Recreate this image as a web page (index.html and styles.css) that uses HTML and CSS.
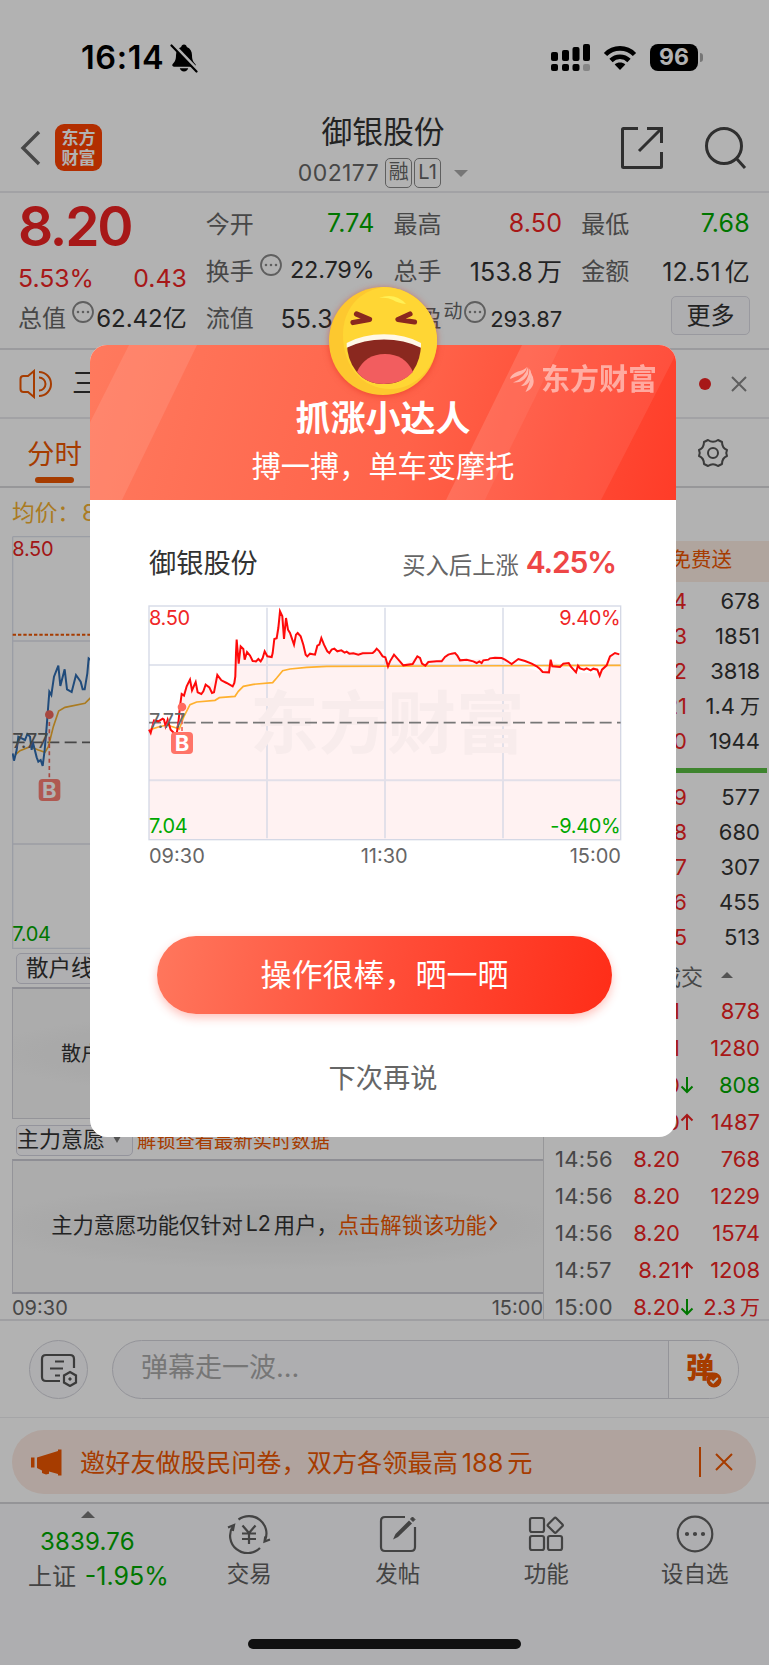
FILE: index.html
```html
<!DOCTYPE html>
<html lang="zh-CN">
<head>
  <meta charset="UTF-8">
  <title>御银股份</title>
  <link rel="stylesheet" href="styles.css">
</head>
<body>
<div class="phone">
  <div class="status">
    <span class="clock">16:14</span>
    <svg class="bell" width="30" height="30" viewBox="0 0 30 30">
      <path d="M15 1.500c1.600 0 2.600 1 2.800 2.500 3.500 1.400 5.200 4.200 5.200 8.300 0 5 1.500 6.800 3.300 8.800.9 1.100.4 2.600-1.200 2.600H4.900c-1.600 0-2.100-1.500-1.200-2.600C5.500 19.100 7 17.300 7 12.300 7 8.200 8.700 5.400 12.200 4c.2-1.500 1.200-2.500 2.800-2.500z"/>
      <path d="M10.800 25.300h8.400c-.5 2-2 3.200-4.200 3.200s-3.700-1.200-4.200-3.200z"/>
      <path d="M4 1.500L28.500 27" stroke="#fff" stroke-width="3.500"/>
      <path d="M2.500 2.500L27.500 28.500" stroke="#000" stroke-width="2.200" stroke-linecap="round"/>
    </svg>
    <svg class="signal" width="40" height="28" viewBox="0 0 40 28">
      <rect x="0" y="8" width="7" height="9" rx="2"/>
      <rect x="11" y="6" width="7" height="11" rx="2"/>
      <rect x="21.500" y="3" width="7" height="14" rx="2"/>
      <rect x="32" y="0" width="7" height="17" rx="2"/>
      <rect x="0" y="20" width="7" height="7" rx="2"/>
      <rect x="11" y="20" width="7" height="7" rx="2"/>
      <rect x="21.500" y="20" width="7" height="7" rx="2"/>
      <rect x="32" y="20" width="7" height="7" rx="2" opacity=".25"/>
    </svg>
    <svg class="wifi" width="34" height="26" viewBox="0 0 34 26">
      <path d="M2.500 9.500C10.500 1.300 23.500 1.300 31.500 9.500" fill="none" stroke="#000" stroke-width="4.600"/>
      <path d="M8 15.500c5-5 13-5 18 0" fill="none" stroke="#000" stroke-width="4.600"/>
      <path d="M17 25l-5.300-5.500c3-2.600 7.600-2.600 10.600 0z"/>
    </svg>
    <span class="battery">96</span><i class="battery-cap"></i>
  </div>

  <div class="header">
    <svg class="back" width="22" height="36" viewBox="0 0 22 36"><path d="M19 2L3 18l16 16" fill="none" stroke="#666" stroke-width="3.400"/></svg>
    <div class="logo"><span>东方</span><span>财富</span></div>
    <div class="stock">
      <h1>御银股份</h1>
      <p><span>002177</span><b class="rong">融</b><b>L1</b><i class="down"></i></p>
    </div>
    <svg class="share" width="44" height="44" viewBox="0 0 44 44" fill="none" stroke="#444" stroke-width="3">
      <path d="M18 2.500H3.500a1 1 0 0 0-1 1v37a1 1 0 0 0 1 1h37a1 1 0 0 0 1-1V26"/>
      <path d="M19 25L41 3M27 2.500h14.500V17"/>
    </svg>
    <svg class="search" width="44" height="44" viewBox="0 0 44 44" fill="none" stroke="#444" stroke-width="3">
      <circle cx="20" cy="20" r="17.500"/><path d="M32 32l9 10"/>
    </svg>
  </div>

  <div class="quote">
    <div class="price-col">
      <div class="price red">8.20</div>
      <div class="change red"><span>5.53%</span><span>0.43</span></div>
      <div class="item"><span class="label">总值</span><svg class="dots" viewBox="0 0 22 22"><circle cx="11" cy="11" r="10"/><path d="M6 11h.01M11 11h.01M16 11h.01"/></svg><span>62.42亿</span></div>
    </div>
    <div class="col">
      <div class="item"><span class="label">今开</span><span class="green">7.74</span></div>
      <div class="item"><span class="label">换手</span><svg class="dots" viewBox="0 0 22 22"><circle cx="11" cy="11" r="10"/><path d="M6 11h.01M11 11h.01M16 11h.01"/></svg><span class="turnover">22.79%</span></div>
      <div class="item"><span class="label">流值</span><span>55.34亿</span></div>
    </div>
    <div class="col">
      <div class="item"><span class="label">最高</span><span class="red">8.50</span></div>
      <div class="item"><span class="label">总手</span><span>153.8<em>万</em></span></div>
      <div class="item pe"><span class="label">市盈<sup>动</sup></span><svg class="dots" viewBox="0 0 22 22"><circle cx="11" cy="11" r="10"/><path d="M6 11h.01M11 11h.01M16 11h.01"/></svg><span>293.87</span></div>
    </div>
    <div class="col">
      <div class="item"><span class="label">最低</span><span class="green">7.68</span></div>
      <div class="item"><span class="label">金额</span><span>12.51<em>亿</em></span></div>
      <div class="item end"><button class="more">更多</button></div>
    </div>
  </div>

  <div class="notice">
    <svg width="34" height="30" viewBox="0 0 34 30" fill="none" stroke="#ee5600" stroke-width="2">
      <path d="M15 2v26l-6-5H4.500Q1.500 23 1.500 20V10Q1.500 7 4.500 7H9z"/>
      <path d="M20 8.500a6.500 6.500 0 0 1 0 13M20 3a12 12 0 0 1 0 24"/>
    </svg>
    <span class="notice-text">三</span>
    <i class="dot"></i>
    <svg width="16" height="16" viewBox="0 0 16 16" stroke="#888" stroke-width="2"><path d="M1 1l14 14M15 1L1 15"/></svg>
  </div>

  <div class="tabs">
    <span class="tab">分时</span>
    <svg width="32" height="32" viewBox="0 0 32 32" fill="none" stroke="#555" stroke-width="2" stroke-linejoin="round">
      <path d="M11 3q5 3.500 10 0l4 2q0 6 5 8 -1.500 3 0 6 -5 2-5 8l-4 2q-5-3.500-10 0l-4-2q0-6-5-8 1.500-3 0-6 5-2 5-8z"/>
      <circle cx="16" cy="16" r="5"/>
    </svg>
  </div>

  <div class="avg">均价：<span>8.13</span></div>

  <div class="main">
    <div class="left">
      <svg class="minute" width="531" height="413" viewBox="36 48 1593 1239">
        <g fill="none" stroke="#dfe2ec" stroke-width="4">
          <path d="M38 50H1629M38 50V1285H1629M38 363H1629M38 972H1629"/>
        </g>
        <path d="M38 344H1629" stroke="#ee5600" stroke-width="6" stroke-dasharray="10 6"/>
        <path d="M38 667H1629" stroke="#666" stroke-width="5" stroke-dasharray="36 16"/>
        <polyline fill="none" stroke="#f4b030" stroke-width="5" points="45,705 60,692 90,680 115,690 135,697 145,680 160,620 176,573 195,562 255,550 270,535 290,530"/>
        <polyline fill="none" stroke="#2f6cb0" stroke-width="6" points="38,700 42,722 50,690 55,650 75,660 82,642 90,650 95,690 98,665 102,680 110,712 115,725 122,720 128,738 134,690 140,620 148,515 154,525 162,470 175,437 181,498 194,448 201,508 215,516 228,465 242,485 248,508 254,508 262,460 266,415 285,430"/>
        <path d="M148 584V775" stroke="#f0685c" stroke-width="5" stroke-dasharray="12 10"/>
        <circle cx="148" cy="584" r="13" fill="#f0685c"/>
        <rect x="116" y="777" width="65" height="66" rx="12" fill="#fb8074"/>
        <text x="148" y="833" class="chart-b">B</text>
        <text x="37" y="108" class="chart-num" fill="#e82222">8.50</text>
        <text x="37" y="684" class="chart-num" fill="#666">7.77</text>
        <text x="37" y="1263" class="chart-num" fill="#00aa00">7.04</text>
      </svg>
      <div class="picker first"><button>散户线</button></div>
      <div class="lock"><p class="lock-one">散户线功能仅针对L2用户</p></div>
      <div class="picker"><button class="second">主力意愿<i class="down"></i></button><span>解锁查看最新实时数据</span></div>
      <div class="lock last"><p>主力意愿功能仅针对<em>L2</em>用户，<span>点击解锁该功能</span><svg width="9" height="16" viewBox="0 0 9 16"><path d="M1 1l6 7-6 7" fill="none" stroke="#ee5600" stroke-width="2"/></svg></p></div>
      <div class="axis"><span>09:30</span><span>15:00</span></div>
    </div>
    <div class="right">
      <div class="free">免费送</div>
      <ul class="orders">
        <li><span>8.24</span><b>678</b></li>
        <li><span>8.23</span><b>1851</b></li>
        <li><span>8.22</span><b>3818</b></li>
        <li><span>8.21</span><b>1.4<em>万</em></b></li>
        <li><span>8.20</span><b>1944</b></li>
      </ul>
      <div class="ratio"></div>
      <ul class="orders buy">
        <li><span>8.19</span><b>577</b></li>
        <li><span>8.18</span><b>680</b></li>
        <li><span>8.17</span><b>307</b></li>
        <li><span>8.16</span><b>455</b></li>
        <li><span>8.15</span><b>513</b></li>
      </ul>
      <div class="deal-title"><span>成交</span><i class="up"></i></div>
      <ul class="deals">
        <li><span>14:56</span><b>8.21</b><i></i><em>878</em></li>
        <li><span>14:56</span><b>8.21</b><i></i><em>1280</em></li>
        <li><span>14:56</span><b>8.20</b><i class="green"><svg width="14" height="18" viewBox="0 0 14 18"><path d="M7 1v15M1.500 10.500L7 16l5.500-5.500"/></svg></i><em class="green">808</em></li>
        <li><span>14:56</span><b>8.20</b><i><svg width="14" height="18" viewBox="0 0 14 18"><path d="M7 17V2M1.500 7.500L7 2l5.500 5.500"/></svg></i><em>1487</em></li>
        <li><span>14:56</span><b>8.20</b><i></i><em>768</em></li>
        <li><span>14:56</span><b>8.20</b><i></i><em>1229</em></li>
        <li><span>14:56</span><b>8.20</b><i></i><em>1574</em></li>
        <li><span>14:57</span><b>8.21</b><i><svg width="14" height="18" viewBox="0 0 14 18"><path d="M7 17V2M1.500 7.500L7 2l5.500 5.500"/></svg></i><em>1208</em></li>
        <li><span>15:00</span><b>8.20</b><i class="green"><svg width="14" height="18" viewBox="0 0 14 18"><path d="M7 1v15M1.500 10.500L7 16l5.500-5.500"/></svg></i><em>2.3<small>万</small></em></li>
      </ul>
    </div>
  </div>

  <div class="danmu">
    <div class="danmu-set">
      <svg width="38" height="34" viewBox="0 0 38 34" fill="none" stroke="#555" stroke-width="2.200">
        <path d="M20 28H6q-4 0-4-4V6q0-4 4-4h24q4 0 4 4v9"/>
        <path d="M15 8.500h9M10 15.500h13M15 22.500h5"/>
        <path d="M30 19l6 3.500v7L30 33l-6-3.500v-7z"/>
        <circle cx="30" cy="26" r="1.200" fill="#555" stroke-width="1"/>
      </svg>
    </div>
    <div class="danmu-input">
      <span>弹幕走一波...</span>
      <div class="danmu-btn">弹<svg width="16" height="16" viewBox="0 0 16 16"><circle cx="8" cy="8" r="7.500" fill="#ee5600"/><path d="M4.500 8l2.700 2.700L11.800 6" fill="none" stroke="#fff" stroke-width="1.800"/></svg></div>
    </div>
  </div>

  <div class="invite-wrap">
    <div class="invite">
      <svg width="31" height="27" viewBox="0 0 31 27" fill="#ee5600">
        <path d="M0 8.500h3.500v10H0zM6 8.500L27 2V0.500h3.500v26H27V25l-9-2.500v2.200l-3 .8-4-1.500v-2.500L6 19z"/>
      </svg>
      <span class="invite-text">邀好友做股民问卷，双方各领最高<em>188</em>元</span>
      <i class="bar"></i>
      <svg width="18" height="18" viewBox="0 0 18 18" stroke="#ee5600" stroke-width="2"><path d="M1 1l16 16M17 1L1 17"/></svg>
    </div>
  </div>

  <div class="footer">
    <div class="index">
      <i class="up"></i>
      <div class="green">3839.76</div>
      <div>上证 <span class="green">-1.95%</span></div>
    </div>
    <div class="nav">
      <svg width="44" height="40" viewBox="0 0 44 40" fill="none" stroke="#606060" stroke-width="2.200">
        <path d="M11.500 5.500A17.500 17.500 0 0 1 38 26.500"/>
        <path d="M43 25.500l-5.500 2 .8-5"/>
        <path d="M33 34A17.500 17.500 0 0 1 6 12"/>
        <path d="M1 13.500l6-2.500-1.200 6"/>
        <path d="M15.500 11.500l6.500 7.500 6.500-7.500M22 19v11M15 19.500h14M15 25h14"/>
      </svg>
      <span>交易</span>
    </div>
    <div class="nav">
      <svg width="40" height="40" viewBox="0 0 40 40" fill="none" stroke="#606060" stroke-width="2.200">
        <path d="M27 3H7Q3 3 3 7v26q0 4 4 4h26q4 0 4-4V13"/>
        <path d="M15 25.500l2.500-5.500L31 6.500l3 3L20 23z" fill="#606060" stroke="none"/>
        <path d="M32.500 5l2-2 2.500 2.500-2 2z" fill="#606060" stroke-width="1"/>
      </svg>
      <span>发帖</span>
    </div>
    <div class="nav">
      <svg width="40" height="40" viewBox="0 0 40 40" fill="none" stroke="#606060" stroke-width="2.200">
        <rect x="4" y="4" width="14" height="14" rx="2"/>
        <rect x="4" y="22" width="14" height="14" rx="2"/>
        <rect x="22" y="22" width="14" height="14" rx="2"/>
        <rect x="23.500" y="5.500" width="11.500" height="11.500" rx="1.500" transform="rotate(45 29.250 11.250)"/>
      </svg>
      <span>功能</span>
    </div>
    <div class="nav">
      <svg width="40" height="40" viewBox="0 0 40 40" fill="none" stroke="#606060" stroke-width="2.200">
        <circle cx="20" cy="20" r="17.300"/>
        <path d="M12 20h.01M20 20h.01M28 20h.01" stroke-width="4.200" stroke-linecap="round"/>
      </svg>
      <span>设自选</span>
    </div>
    <div class="home"></div>
  </div>

  <div class="mask">
    <div class="modal">
      <svg class="face" width="116" height="116" viewBox="-4 -4 116 116">
        <circle cx="54" cy="54" r="54" fill="#fdc82f"/>
        <path d="M54 0a54 54 0 0 1 54 54c0 24-20 48-47 48S14 80 14 48C14 22 30 4 54 0z" fill="#ffd634"/>
        <path d="M50 11q16-6 27 6-8-1-13-4-6-3-14-2z" fill="#fff056"/>
        <path d="M27.500 27l13 5.500-16.500 3M81 27l-12 5.500 16.500 2.500" fill="none" stroke="#8a281f" stroke-width="5.200" stroke-linecap="round" stroke-linejoin="round"/>
        <path d="M18 57q37-14 74 0 0 15-8 27-11 13-29 13T27 84q-9-12-9-27z" fill="#8a281f"/>
        <path d="M28 85q8-18 28-18t28 18q-11 12-29 12T28 85z" fill="#f25d5f"/>
        <path d="M17.700 56q16-8.700 37.300-8.700T92 56v4.700Q75 52.500 55 52.500t-37.300 8.200z" fill="#fff8e8"/>
      </svg>
      <div class="modal-head">
        <svg class="stripes" width="586" height="155" viewBox="0 0 586 155">
          <path d="M39 0h68L32 155h-71z" fill="#fff" opacity=".1"/>
          <path d="M432 0h39l-76 155h-39z" fill="#fff" opacity=".13"/>
          <path d="M471 0h115v9l-75 146H395z" fill="#fff" opacity=".08"/>
        </svg>
        <div class="brand">
          <svg width="24" height="26" viewBox="0 0 24 26" fill="#fff">
            <path d="M0 12Q1 7 8 4.500 14 3 17 0q-1 6-8 8.500Q4 10 0 12z"/>
            <path d="M3 15.500Q15 11 18 0q2 7-3.500 12Q10 16 3 15.500z"/>
            <path d="M11 19q8-6 8.500-17.500Q23 7 20 13.500 17 19 11 19z"/>
            <path d="M15.500 25q5-9 5.500-19 4 6 2 12-2 5-7.500 7z"/>
          </svg>
          <span>东方财富</span>
        </div>
        <h2>抓涨小达人</h2>
        <p>搏一搏，单车变摩托</p>
      </div>
      <div class="modal-body">
        <div class="gain">
          <span class="name">御银股份</span>
          <span class="gain-label">买入后上涨</span>
          <strong>4.25%</strong>
        </div>
        <svg class="chart" width="474" height="236" viewBox="444 256 1422 708">
          <path d="M447 640L462 602 488 597 512 630 530 642 545 523 570 480 604 523 652 466 698 500 710 380 758 424 815 412 840 275 882 375 893 340 917 405 945 405 964 355 988 400 1130 392 1164 440 1182 405 1210 437 1252 410 1276 438 1360 400 1380 422 1505 414 1535 433 1628 457 1652 420 1690 442 1728 458 1799 462 1840 404 1862 404V958H447z" fill="#fff2f2"/>
          <g fill="none" stroke="#cfd4e2" stroke-opacity=".6" stroke-width="6">
            <path d="M801 264V956M1155 264V956M1509 264V956M447 436H1862M447 782H1862"/>
            <rect x="447" y="259" width="1415" height="701" stroke-width="4" stroke-opacity=".9"/>
          </g>
          <text x="750" y="686" class="chart-mark">东方财富</text>
          <path d="M447 609H1862" stroke="#777" stroke-width="5" stroke-dasharray="36 16"/>
          <polyline fill="none" stroke="#ffb02e" stroke-width="5" points="450,630 475,622 500,616 520,622 538,628 552,590 570,555 590,547 645,542 658,534 705,530 715,515 730,500 760,494 818,489 830,475 848,453 870,448 920,443 980,440 1862,437"/>
          <polyline fill="none" stroke="#ff0a0a" stroke-width="6" points="447,630 452,640 462,602 475,605 488,597 492,600 497,620 503,600 512,630 522,640 530,642 535,610 540,560 545,523 552,528 560,500 570,480 576,512 587,487 593,518 604,523 610,515 617,495 628,503 636,520 642,518 652,466 664,482 680,490 698,500 703,490 706,470 708,400 710,360 716,432 722,380 730,388 734,420 741,397 750,408 758,424 768,425 775,418 782,425 788,415 794,395 802,410 815,412 818,400 823,358 830,356 835,325 840,275 847,290 852,358 858,295 864,330 870,340 882,375 888,345 893,340 902,350 910,375 917,405 922,410 930,402 945,405 952,378 958,375 964,355 972,375 982,395 988,400 995,390 1003,387 1012,395 1024,392 1034,399 1040,396 1048,402 1060,401 1075,405 1088,401 1118,400 1124,395 1130,387 1138,395 1148,410 1156,413 1164,440 1170,425 1182,405 1195,420 1210,437 1238,433 1252,410 1260,415 1266,432 1276,438 1285,427 1310,425 1325,425 1335,412 1345,405 1355,402 1365,400 1372,408 1380,422 1400,420 1420,425 1430,430 1438,425 1445,430 1450,422 1465,420 1470,416 1485,414 1505,415 1515,420 1535,433 1555,418 1575,424 1595,432 1610,440 1620,448 1628,457 1647,458 1652,420 1657,440 1680,442 1690,432 1706,430 1712,440 1728,458 1734,438 1740,446 1752,450 1760,446 1772,452 1780,447 1792,450 1799,468 1806,450 1820,437 1830,410 1845,400 1858,404"/>
          <path d="M546 562V640" stroke="#f0685c" stroke-width="5" stroke-dasharray="12 8"/>
          <circle cx="546" cy="562" r="13" fill="#ff6a5e"/>
          <rect x="513" y="637" width="66" height="66" rx="12" fill="#ff7468"/>
          <text x="546" y="693" class="chart-b">B</text>
          <text x="447" y="315" class="chart-num" fill="#f02626">8.50</text>
          <text x="447" y="626" class="chart-num" fill="#666">7.77</text>
          <text x="447" y="940" class="chart-num" fill="#00a800">7.04</text>
          <text x="1861" y="315" class="chart-num end" fill="#f02626">9.40%</text>
          <text x="1861" y="940" class="chart-num end" fill="#00a800">-9.40%</text>
        </svg>
        <div class="times"><span>09:30</span><span class="noon">11:30</span><span>15:00</span></div>
        <button class="show">操作很棒，晒一晒</button>
        <div class="later">下次再说</div>
      </div>
    </div>
  </div>
</div>
</body>
</html>
```

FILE: styles.css
```css
* {
  margin: 0;
  padding: 0;
  box-sizing: border-box;
}
body {
  background: #fff;
  font-family: Inter, "Noto Sans CJK SC", sans-serif;
  color: #333;
}
ul, li {
  list-style: none;
}
em, i {
  font-style: normal;
}
svg {
  display: block;
  flex: none;
}
button {
  font-family: inherit;
  color: inherit;
  border: 0;
}
.phone {
  position: relative;
  width: 769px;
  height: 1665px;
  overflow: hidden;
  white-space: nowrap;
}
.red {
  color: #f02323;
}
.green {
  color: #00aa00 !important;
}
.up, .down {
  width: 0;
  height: 0;
  border: 6px solid transparent;
}
.up {
  border-top: 0;
  border-bottom-color: #777;
}
.down {
  border-bottom: 0;
  border-top-color: #aaa;
}

/* 状态栏 */
.status {
  height: 104px;
  padding: 11px 66px 0 81px;
  display: flex;
  align-items: center;
  color: #000;
}
.clock {
  font-size: 32.500px;
  font-weight: 600;
  width: 88px;
  letter-spacing: .6px;
}
.signal {
  margin-left: auto;
}
.wifi {
  margin: 0 13px 0 12px;
}
.battery {
  width: 48px;
  height: 27px;
  line-height: 27px;
  border-radius: 8px;
  background: #000;
  color: #fff;
  font-size: 23px;
  font-weight: 700;
  text-align: center;
}
.battery-cap {
  width: 3px;
  height: 9px;
  margin-left: 2px;
  border-radius: 0 3px 3px 0;
  background: #aaa;
}

/* 头部 */
.header {
  height: 89px;
  border-bottom: 2px solid #e9e9ec;
  display: flex;
  padding: 0 21px 0 20px;
}
.back {
  margin-top: 26px;
}
.logo {
  width: 47px;
  height: 47px;
  margin: 20px 0 0 13px;
  padding-top: 4px;
  border-radius: 9px;
  background: #ff4200;
  color: #fff;
  font-size: 17px;
  font-weight: 700;
  line-height: 20px;
  text-align: center;
  display: flex;
  flex-direction: column;
}
.stock {
  flex: 1;
  padding-left: 44px;
  text-align: center;
}
.stock h1 {
  margin-top: 7px;
  font-size: 30.800px;
  line-height: 41px;
  font-weight: 400;
}
.stock p {
  display: flex;
  align-items: center;
  justify-content: center;
  height: 40px;
  margin-top: 1px;
  font-size: 23px;
  letter-spacing: .4px;
  color: #666;
}
.stock b {
  width: 27px;
  height: 30px;
  line-height: 27px;
  border: 1.500px solid #888;
  border-radius: 5px;
  font-size: 20px;
  font-weight: 400;
  letter-spacing: 0;
  margin-left: 2px;
}
.stock .rong {
  margin-left: 6px;
}
.stock .down {
  border-width: 7px 7px 0;
  margin-left: 13px;
}
.share {
  margin-top: 22px;
}
.search {
  margin: 22px 0 0 40px;
}

/* 行情 */
.quote {
  height: 157px;
  padding: 6px 19px 0 18px;
  border-bottom: 2px solid #dedee2;
  display: grid;
  grid-template-columns: repeat(4, 1fr);
  gap: 19px;
  font-size: 24px;
}
.price {
  height: 54px;
  line-height: 54px;
  font-size: 55px;
  font-weight: 600;
  letter-spacing: -2.200px;
}
.change {
  height: 50px;
  line-height: 50px;
  font-size: 24.800px;
  letter-spacing: 0;
  display: flex;
  justify-content: space-between;
}
.item {
  height: 47px;
  display: flex;
  align-items: center;
}
.col .item > span:last-child {
  font-size: 25px;
  letter-spacing: .2px;
}
.price-col .item {
  height: 27px;
  letter-spacing: 0;
}
.item .label {
  letter-spacing: 0;
  color: #666;
  margin-top: -1px;
}
.item > span:last-child {
  margin-left: auto;
}
.item em {
  margin-left: 4px;
}
.item sup {
  display: inline-block;
  font-size: 19px;
  line-height: 20px;
  vertical-align: 9px;
  margin-left: 2px;
}
.col .item .turnover:last-child {
  font-size: 23.500px;
  letter-spacing: -.2px;
}
.dots {
  width: 22px;
  height: 22px;
  margin: 0 0 9px 6px;
  fill: none;
  stroke: #888;
  stroke-width: 1.800;
}
.dots path {
  stroke-width: 2.600;
  stroke-linecap: round;
}
.pe .dots {
  margin-left: 1px;
}
.col .pe span:last-child {
  font-size: 22px;
  letter-spacing: 0;
  padding-top: 4px;
}
.item.end {
  justify-content: flex-end;
}
.more {
  width: 79px;
  height: 39px;
  margin-top: -3px;
  border: 1px solid #dcdce4;
  border-radius: 5px;
  background: #f9f9fc;
  font-size: 24px;
  line-height: 35px;
}

/* 公告 */
.notice {
  height: 69px;
  padding: 0 22px 0 19px;
  border-bottom: 2px solid #e9e9ec;
  display: flex;
  align-items: center;
}
.notice-text {
  margin-left: 19px;
  font-size: 27px;
  line-height: 40px;
}
.dot {
  width: 12px;
  height: 12px;
  margin: 0 20px 0 auto;
  border-radius: 50%;
  background: #f02323;
}
.tabs {
  height: 69px;
  padding: 0 40px 0 27px;
  border-bottom: 2px solid #d8d8dc;
  display: flex;
  align-items: center;
  justify-content: space-between;
}
.tab {
  position: relative;
  font-size: 27.500px;
  line-height: 67px;
  padding-top: 3px;
  color: #ee5600;
}
.tab::after {
  content: "";
  position: absolute;
  left: 8px;
  bottom: 5px;
  width: 39px;
  height: 6px;
  border-radius: 3px;
  background: #ee5600;
}
.avg {
  height: 48px;
  line-height: 50px;
  padding-left: 12px;
  font-size: 22.700px;
  color: #f4b030;
}
.avg span {
  margin-left: 2px;
}

/* 分时和五档 */
.main {
  height: 785px;
  display: flex;
  border-bottom: 2px solid #e4e4e8;
}
.left {
  width: 544px;
  padding-left: 12px;
  border-right: 1px solid #d8d8dc;
}
.chart-num {
  font-size: 60px;
  letter-spacing: -1px;
}
.chart-num.end {
  text-anchor: end;
}
.chart-b {
  font-size: 66px;
  font-weight: 700;
  fill: #fff;
  text-anchor: middle;
}
.chart-mark {
  font-size: 206px;
  font-weight: 700;
  fill: #f8ecec;
}
.picker {
  height: 40px;
  padding: 2px 0 0 4px;
  display: flex;
  align-items: center;
  font-size: 19.300px;
  color: #ee5600;
}
.picker.first {
  height: 38px;
  padding-top: 0;
}
.picker button {
  width: 117px;
  height: 31px;
  padding-left: 9px;
  border: 1px solid #d4d4e0;
  border-radius: 5px;
  background: #fbfbfe;
  color: #333;
  font-size: 22.500px;
  text-align: left;
  display: flex;
  align-items: center;
  line-height: 28px;
}
.picker button.second {
  padding: 0 0 2px;
  font-size: 22px;
}
.picker span {
  margin-left: 4px;
}
.picker .down {
  border-width: 7px 4px 0;
  border-top-color: #777;
  margin-left: 8px;
}
.lock {
  height: 132px;
  border: 1px solid #d4d4dc;
  border-top: 2px solid #ccccd4;
  border-right: 0;
  background: radial-gradient(ellipse 60% 35% at 50% 50%, #e8e8e8, #f7f7f7);
  display: flex;
  align-items: center;
  justify-content: center;
  font-size: 20px;
}
.lock.last {
  height: 135px;
  border-bottom: 2px solid #ccccd4;
}
.lock p {
  display: flex;
  align-items: center;
  padding: 0 7px 7px 0;
  font-size: 21.300px;
}
.lock em {
  margin: 0 3px;
}
.lock .lock-one {
  margin-right: auto;
  padding: 0 0 3px 48px;
  font-size: 20px;
}
.lock p span {
  color: #ee5600;
}
.lock svg {
  margin-left: 2px;
}
.axis {
  display: flex;
  justify-content: space-between;
  line-height: 28px;
  font-size: 20px;
  color: #666;
}
.right {
  width: 225px;
  font-size: 22px;
}
.free {
  height: 41px;
  margin-top: 5px;
  padding-right: 37px;
  line-height: 37px;
  background: #fdece3;
  color: #ee5600;
  font-size: 20.500px;
  text-align: right;
}
.orders {
  padding: 1px 9px 0 0;
}
.orders li {
  height: 35px;
  display: flex;
  justify-content: flex-end;
  align-items: center;
}
.orders span {
  color: #f02323;
}
.orders b {
  width: 73px;
  font-weight: 400;
  text-align: right;
}
.orders em {
  margin-left: 5px;
  font-size: 20px;
}
.ratio {
  height: 5px;
  margin: 10px 2px 0 0;
  background: #59be42;
}
.orders.buy {
  padding-top: 6px;
}
.deal-title {
  height: 38px;
  padding: 4px 36px 0 0;
  display: flex;
  align-items: center;
  justify-content: flex-end;
  color: #666;
}
.deal-title .up {
  margin-left: 18px;
}
.deals li {
  height: 37px;
  padding: 0 9px 0 11px;
  display: flex;
  align-items: center;
  color: #f02323;
}
.deals span {
  width: 57px;
  color: #666;
  letter-spacing: .3px;
}
.deals b {
  width: 68px;
  font-weight: 400;
  text-align: right;
}
.deals i {
  width: 14px;
  height: 18px;
}
.deals svg {
  fill: none;
  stroke: currentColor;
  stroke-width: 2;
}
.deals em {
  margin-left: auto;
}
.deals small {
  margin-left: 4px;
  font-size: 20px;
}

/* 弹幕 */
.danmu {
  height: 97px;
  padding: 0 30px 0 29px;
  border-bottom: 1px solid #ececf0;
  display: flex;
  align-items: center;
}
.danmu-set {
  width: 59px;
  height: 59px;
  margin-right: 24px;
  padding: 1px 0 0 1px;
  border: 1px solid #d4d4dc;
  border-radius: 50%;
  background: #f9f9fc;
  display: flex;
  align-items: center;
  justify-content: center;
}
.danmu-input {
  flex: 1;
  height: 59px;
  border: 1px solid #d4d4dc;
  border-radius: 30px;
  background: #f9f9fc;
  display: flex;
  justify-content: space-between;
  overflow: hidden;
  font-size: 27px;
  line-height: 53px;
  color: #aaa;
  padding-left: 28px;
}
.danmu-btn {
  position: relative;
  width: 70px;
  padding: 1px 0 0 17px;
  border-left: 1px solid #d4d4dc;
  background: #fff;
  color: #ee5600;
  font-size: 28px;
  font-weight: 900;
}
.danmu-btn svg {
  position: absolute;
  left: 37px;
  top: 31px;
}
.invite-wrap {
  height: 86px;
  padding: 12px 13px 0 12px;
  border-bottom: 2px solid #d4d4d8;
}
.invite {
  height: 64px;
  padding: 0 23px 0 19px;
  border-radius: 32px;
  background: #fdeae2;
  display: flex;
  align-items: center;
  color: #ee5600;
}
.invite-text {
  margin-left: 18px;
  padding-bottom: 2px;
  font-size: 25.200px;
}
.invite-text em {
  margin: 0 4px;
}
.bar {
  width: 2px;
  height: 30px;
  margin: 0 14px 0 auto;
  background: #ee5600;
}

/* 底部 */
.footer {
  position: relative;
  height: 161px;
  background: #f9f9fc;
  display: flex;
  color: #606060;
}
.index {
  width: 175px;
  padding: 7px 0 0 28px;
  font-size: 24px;
}
.index .up {
  display: block;
  margin-left: 53px;
  border-width: 0 7px 7px;
}
.index div {
  height: 35px;
  line-height: 35px;
}
.index > .green {
  margin-top: 6px;
  padding-left: 12px;
  letter-spacing: .2px;
}
.index span {
  margin-left: 2px;
  font-size: 25px;
}
.nav {
  width: 148.500px;
  padding-top: 10px;
  display: flex;
  flex-direction: column;
  align-items: center;
  font-size: 22.500px;
}
.nav span {
  margin-top: 3px;
  line-height: 33px;
}
.home {
  position: absolute;
  left: 248px;
  bottom: 16px;
  width: 273px;
  height: 10px;
  border-radius: 5px;
  background: #181818;
}

/* 弹窗 */
.mask {
  position: absolute;
  top: 0;
  left: 0;
  width: 100%;
  height: 100%;
  background: rgba(0,0,0,.3);
}
.modal {
  position: absolute;
  left: 90px;
  top: 345px;
  width: 586px;
  height: 792px;
  border-radius: 17px;
  background: #fff;
}
.face {
  position: absolute;
  z-index: 2;
  left: 235px;
  top: -62px;
  filter: drop-shadow(0 1px 3px rgba(220,40,20,.5));
}
.modal-head {
  position: relative;
  height: 155px;
  padding-top: 50px;
  border-radius: 17px 17px 0 0;
  background: linear-gradient(105deg, #ff7a5e, #ff6249 55%, #ff3c28);
  color: #fff;
  text-align: center;
  overflow: hidden;
}
.stripes {
  position: absolute;
  left: 0;
  top: 0;
}
.brand {
  position: absolute;
  right: 19px;
  top: 16px;
  display: flex;
  align-items: center;
  opacity: .5;
  font-size: 29px;
  font-weight: 700;
  line-height: 38px;
}
.brand span {
  margin-left: 7px;
}
.modal-head h2 {
  position: relative;
  font-size: 35px;
  line-height: 46px;
  font-weight: 700;
}
.modal-head p {
  position: relative;
  font-size: 29.200px;
  line-height: 52px;
}
.modal-body {
  padding: 40px 54px 0 58px;
}
.gain {
  height: 44px;
  padding: 0 6px 0 1px;
  display: flex;
  align-items: center;
}
.name {
  padding-bottom: 2px;
  font-size: 27.200px;
}
.gain-label {
  margin-left: auto;
  padding-top: 3px;
  font-size: 23.300px;
  color: #666;
}
.gain strong {
  margin-left: 7px;
  font-size: 30px;
  font-weight: 600;
  letter-spacing: -1.200px;
  color: #ee4646;
}
.chart {
  margin-top: 21px;
}
.times {
  display: flex;
  justify-content: space-between;
  padding: 0 1px;
  line-height: 30px;
  font-size: 20px;
  color: #666;
}
.times .noon {
  margin-right: 6px;
}
.show {
  display: block;
  width: 455px;
  height: 78px;
  margin: 65px 0 0 9px;
  padding-bottom: 6px;
  border-radius: 39px;
  background: linear-gradient(100deg, #ff775d, #ff4e39 50%, #ff2d18);
  box-shadow: 0 4px 10px rgba(255,60,40,.3);
  color: #fff;
  font-size: 31px;
}
.later {
  margin: 45px 4px 0 0;
  line-height: 40px;
  text-align: center;
  font-size: 27.200px;
  color: #666;
}
```
